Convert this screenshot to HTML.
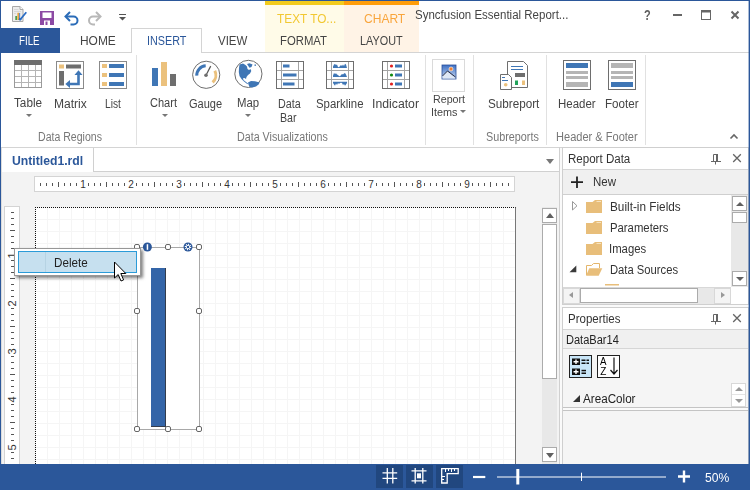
<!DOCTYPE html>
<html><head><meta charset="utf-8"><title>Syncfusion Essential Report Designer</title>
<style>
*{box-sizing:border-box;margin:0;padding:0}
html,body{width:750px;height:490px;overflow:hidden;background:#fff}
body{position:relative;font-family:"Liberation Sans",sans-serif;font-size:12px;color:#444}
.a{position:absolute}
.t{position:absolute;white-space:nowrap;line-height:16px;transform-origin:0 0}
.sep{position:absolute;width:1px;background:#e1e1e1;top:55px;height:90px}
.dd{position:absolute;width:0;height:0;border-left:3px solid transparent;border-right:3px solid transparent;border-top:3px solid #777}
.rn{position:absolute;font-size:10px;line-height:12px;color:#333;transform:translateX(-50%);background:#fff;padding:0 1px}
.rv{position:absolute;font-size:10px;line-height:12px;color:#333;transform:translate(-50%,-50%) rotate(-90deg);background:#fff;padding:0 1px}
.hd{position:absolute;width:6px;height:6px;border:1px solid #666;border-radius:2px;background:#fff}
.sb{position:absolute;background:#fff;border:1px solid #ababab}
.au{position:absolute;width:0;height:0;border-left:4px solid transparent;border-right:4px solid transparent;border-bottom:5px solid #606060}
.ad{position:absolute;width:0;height:0;border-left:4px solid transparent;border-right:4px solid transparent;border-top:5px solid #606060}
</style></head><body>
<!-- contextual tab groups -->
<div class="a" style="left:265px;top:0;width:79px;height:52px;background:#fffbe8"></div>
<div class="a" style="left:265px;top:0;width:79px;height:5px;background:#f2cb1d"></div>
<div class="a" style="left:344px;top:0;width:75px;height:52px;background:#fff3e6"></div>
<div class="a" style="left:344px;top:0;width:75px;height:5px;background:#ff9d0a"></div>
<!-- tab row -->
<div class="a" style="left:1px;top:52px;width:748px;height:1px;background:#d4d4d4"></div>
<div class="a" style="left:0;top:28px;width:60px;height:25px;background:#2b579a"></div>
<div class="a" style="left:131px;top:28px;width:71px;height:25px;background:#fff;border:1px solid #d4d4d4;border-bottom:none"></div>
<!-- ribbon group separators -->
<div class="sep" style="left:136px"></div>
<div class="sep" style="left:425px"></div>
<div class="sep" style="left:473px"></div>
<div class="sep" style="left:546px"></div>
<div class="sep" style="left:645px"></div>
<div class="a" style="left:1px;top:147px;width:748px;height:1px;background:#d4d4d4"></div>
<div class="a" style="left:1px;top:148px;width:748px;height:316px;background:#f3f3f3"></div>
<div class="a" style="left:1px;top:148px;width:1px;height:316px;background:#dcdcdc"></div>
<div class="dd" style="left:26px;top:114px"></div>
<div class="dd" style="left:161.5px;top:114px"></div>
<div class="dd" style="left:245px;top:114px"></div>
<div class="dd" style="left:460px;top:110px"></div>
<div class="a" style="left:432px;top:59px;width:33px;height:33px;border:1px solid #dadada;background:#fff"></div>
<svg class="a" style="left:0;top:0" width="750" height="147" viewBox="0 0 750 147">
<!-- app icon -->
<path d="M12.500 6.500H20L23 9.500V21.500H12.500Z" fill="#ececec" stroke="#a8a8a8"/>
<path d="M20 6.500V9.500H23" fill="#fff" stroke="#a8a8a8"/>
<path d="M14 9.500H18.500M14 11.500H21M14 13.500H16" stroke="#d8d8d8" stroke-width="1"/>
<rect x="15.300" y="16" width="1.800" height="4" fill="#4a9c4a"/><rect x="17.400" y="12.800" width="1.700" height="7.200" fill="#e8a33d"/><rect x="19.300" y="13" width="0.800" height="7" fill="#2b6cc4"/>
<path d="M20 19.800L21.500 18L26.300 12.200" fill="none" stroke="#2b6cc4" stroke-width="1.800"/><circle cx="20" cy="19.300" r="1.200" fill="#2b6cc4"/>
<!-- save -->
<path d="M40 11H54V25H40Z" fill="#8c4aa4"/><rect x="42.500" y="12.500" width="9" height="5.500" fill="#fff"/><rect x="44" y="20.500" width="6" height="4.500" fill="#fff"/><rect x="45.500" y="21.500" width="2" height="3.500" fill="#8c4aa4"/>
<!-- undo -->
<path d="M70 12L65.500 16.500L70 21" fill="none" stroke="#2b6cb8" stroke-width="2"/><path d="M66 16.500H73.500A4 4 0 0 1 73.500 24.500H70.500" fill="none" stroke="#2b6cb8" stroke-width="2"/>
<!-- redo -->
<path d="M96 12L100.500 16.500L96 21" fill="none" stroke="#b8b8b8" stroke-width="2"/><path d="M100 16.500H93A4 4 0 0 0 93 24.500H95" fill="none" stroke="#b8b8b8" stroke-width="2"/>
<!-- qat dropdown -->
<rect x="119" y="14" width="7" height="1" fill="#555"/><path d="M119 17H126L122.500 20.500Z" fill="#555"/>
<!-- window buttons -->
<rect x="673" y="14" width="9" height="2" fill="#666"/>
<rect x="701.500" y="10.500" width="9" height="9" fill="none" stroke="#666"/><rect x="701" y="10" width="10" height="2.500" fill="#666"/>
<path d="M731.500 11.500L738.500 18.500M738.500 11.500L731.500 18.500" stroke="#666" stroke-width="2" fill="none"/>
<!-- collapse caret -->
<path d="M730.500 138.500L734 135L737.500 138.500" fill="none" stroke="#666" stroke-width="1.600"/>

<!-- Table -->
<rect x="14.500" y="60.500" width="27" height="27" fill="#fff" stroke="#9a9a9a"/>
<rect x="14" y="60" width="28" height="5" fill="#6e6e6e"/>
<path d="M21.500 65V87M28.500 65V87M35.500 65V87M15 70.500H41M15 76.500H41M15 82.500H41" stroke="#b4b4b4" fill="none"/>
<!-- Matrix -->
<rect x="56.500" y="61.500" width="27" height="27" fill="#fff" stroke="#8a8a8a"/>
<rect x="59" y="64.500" width="5" height="4" fill="#ebc17d"/><rect x="66" y="64.500" width="15" height="4" fill="#6e6e6e"/><rect x="59" y="71" width="5" height="14.500" fill="#6e6e6e"/>
<path d="M78.500 84H69M78.500 85.300V74" fill="none" stroke="#3f76b5" stroke-width="2.600"/><path d="M74.500 75L78.500 70.300L82.500 75Z" fill="#3f76b5"/><path d="M70 80L65.300 84L70 88Z" fill="#3f76b5"/>
<!-- List -->
<rect x="99.500" y="61.500" width="27" height="27" fill="#fff" stroke="#8a8a8a"/>
<g fill="#ebc17d"><rect x="102" y="64" width="5" height="4"/><rect x="102" y="73" width="5" height="4"/><rect x="102" y="82" width="5" height="4"/></g>
<g fill="#3f76b5"><rect x="109" y="64" width="15" height="4"/><rect x="109" y="73" width="15" height="4"/><rect x="109" y="82" width="15" height="4"/></g>
<!-- Chart -->
<rect x="152" y="68" width="6" height="18" fill="#3f76b5"/><rect x="161" y="62" width="6" height="24" fill="#ebc17d"/><rect x="170" y="74" width="6" height="12" fill="#6e6e6e"/>
<!-- Gauge -->
<circle cx="206.200" cy="74.800" r="13.600" fill="#fff" stroke="#6e6e6e" stroke-width="1"/>
<path d="M196.800 75.700A9.400 9.400 0 0 1 205.700 65.800" fill="none" stroke="#3f76b5" stroke-width="3"/>
<path d="M214.800 70.800A9.400 9.400 0 0 1 212.600 82.300" fill="none" stroke="#ebc17d" stroke-width="3"/>
<path d="M206 75.200L210.700 66.100" stroke="#555" stroke-width="1.200"/><circle cx="206" cy="75.200" r="1.800" fill="#6e6e6e"/>
<!-- Map -->
<circle cx="248.400" cy="73.900" r="13.600" fill="#fff" stroke="#6e6e6e" stroke-width="1"/>
<path d="M239.500 64.500L243 63.500L245.500 65L247 66.500L247.500 69L249 70L250.500 69L251.300 71L250 73.500L248 75L246.500 77L246 79L244.500 78L243 78.300L243.500 80L246 82L248 83.500L247.500 84.300L244 81.500L241.500 79L239.500 76L238.800 72L239 68Z" fill="#3f76b5"/>
<path d="M248 82.500L251 81L255 81.200L259.700 82.500L258.500 84.500L256 86.500L252 87.600L249.500 87L248.500 84.500Z" fill="#3f76b5"/>
<path d="M247 64L249.500 63.300L252.500 64.500L251.500 67L249.500 67.700L248.300 66Z" fill="#3f76b5"/><rect x="254.500" y="64.500" width="1.500" height="1.300" fill="#3f76b5"/>
<!-- DataBar -->
<g id="tbl"><rect x="276.500" y="61.500" width="27" height="27" fill="#fff" stroke="#6e6e6e"/><path d="M281.500 62V88M298.500 62V88M277 70.500H303M277 79.500H303" stroke="#a4a4a4" fill="none"/></g>
<g fill="#3f76b5"><rect x="283" y="64.500" width="6.500" height="3"/><rect x="283" y="73.500" width="13.500" height="3"/><rect x="283" y="82.500" width="11.500" height="3"/></g>
<!-- Sparkline -->
<use href="#tbl" x="50"/>
<g fill="#3f76b5"><path d="M333 68V66.500L334 64.500L335 64L336 65L337 64.500L338 67L339 67.200L340 66L341 65L342 66L343 64.500L344 66L345 63.800L346 64.500L347 68Z"/><path d="M333 77V75.500L334 73L335 74L336 73.200L337 74.500L338 75L339 76L340 76.200L341 75L342 74L343 74.500L344 73.500L345 73L346 74.500L347 77Z"/><path d="M333 81.700H347V83L346 84.500L345 85.800L344 84L343 85L342 83L341 82.800L340 83L339 84L338 83L337 85L336 83.500L335 85.800L334 84.500L333 83Z"/></g>
<!-- Indicator -->
<use href="#tbl" x="106"/>
<circle cx="391.500" cy="66" r="1.600" fill="#e02020"/><circle cx="391.500" cy="75" r="1.600" fill="#118a11"/><circle cx="391.500" cy="84" r="1.600" fill="#e02020"/>
<g fill="#3f76b5"><rect x="395" y="64.500" width="7" height="3"/><rect x="395" y="73.500" width="7" height="3"/><rect x="395" y="82.500" width="7" height="3"/></g>
<!-- Report items picture -->
<defs><linearGradient id="pg" x1="0" y1="0" x2="0" y2="1"><stop offset="0" stop-color="#3d6fc4"/><stop offset="1" stop-color="#c8d8f0"/></linearGradient></defs>
<rect x="442" y="65" width="14" height="14" fill="url(#pg)" stroke="#2a4f9a" stroke-width="0.800"/>
<circle cx="451" cy="69" r="2" fill="#f08030" stroke="#fff" stroke-width="0.600"/>
<path d="M442.500 76L447.500 71L452 75.500L455.500 78.500H442.500Z" fill="#dfe8f5"/><path d="M442.500 76L447.500 71L455.500 77" fill="none" stroke="#223" stroke-width="0.900"/>
<!-- Subreport -->
<path d="M507.500 61.500H523.500L527.500 65.500V87.500H507.500Z" fill="#fff" stroke="#6e6e6e"/>
<path d="M511 66.500H523M511 69.500H523" stroke="#3f76b5"/><rect x="515" y="73" width="10" height="4" fill="#6e6e6e"/><rect x="515" y="80.500" width="3" height="4.500" fill="#22a35a"/><rect x="522" y="80.500" width="3" height="4.500" fill="#ebc17d"/>
<path d="M500.500 74.500H508.500L511.500 77.500V89.500H500.500Z" fill="#fff" stroke="#6e6e6e"/>
<path d="M502 77.500H505M502 80.500H508" stroke="#3f76b5"/><circle cx="505.700" cy="84.800" r="1.800" fill="#ebc17d"/>
<!-- Header -->
<rect x="563.500" y="60.500" width="27" height="29" fill="#fff" stroke="#6e6e6e"/>
<rect x="566" y="63" width="22" height="5" fill="#3f76b5"/><rect x="566" y="71" width="22" height="3" fill="#b5b5b5"/><rect x="566" y="76" width="22" height="3" fill="#b5b5b5"/><rect x="566" y="82" width="22" height="5" fill="#b5b5b5"/>
<!-- Footer -->
<rect x="608.500" y="60.500" width="27" height="29" fill="#fff" stroke="#6e6e6e"/>
<rect x="611" y="63" width="22" height="5" fill="#b5b5b5"/><rect x="611" y="71" width="22" height="3" fill="#b5b5b5"/><rect x="611" y="76" width="22" height="3" fill="#b5b5b5"/><rect x="611" y="82" width="22" height="5" fill="#3f76b5"/>
</svg>

<!-- document tab strip -->
<div class="a" style="left:2px;top:148px;width:92px;height:24px;background:#fff"></div>
<div class="a" style="left:93px;top:148px;width:467px;height:24px;background:#fff;border-left:1px solid #d0d0d0;border-bottom:1px solid #d0d0d0"></div>
<div class="a" style="left:546px;top:159px;width:0;height:0;border-left:4px solid transparent;border-right:4px solid transparent;border-top:5.500px solid #777"></div>
<div class="a" style="left:34px;top:176px;width:481px;height:16px;background:#fff;border:1px solid #d4d4d4"></div>
<div class="a" style="left:40px;top:183px;width:470px;height:3px;background:repeating-linear-gradient(90deg,#555 0,#555 1px,transparent 1px,transparent 6px)"></div>
<div class="a" style="left:58px;top:182px;width:452px;height:5px;background:repeating-linear-gradient(90deg,#555 0,#555 1px,transparent 1px,transparent 48px)"></div>
<div class="a" style="left:4px;top:206px;width:16px;height:258px;background:#fff;border:1px solid #d4d4d4;border-bottom:none"></div>
<div class="a" style="left:11px;top:212px;width:3px;height:252px;background:repeating-linear-gradient(180deg,#555 0,#555 1px,transparent 1px,transparent 6px)"></div>
<div class="a" style="left:10px;top:230px;width:5px;height:234px;background:repeating-linear-gradient(180deg,#555 0,#555 1px,transparent 1px,transparent 48px)"></div>
<div class="a" style="left:35px;top:207px;width:481px;height:257px;background-color:#fff;background-image:linear-gradient(#f5f5f5 1px,transparent 1px),linear-gradient(90deg,#f5f5f5 1px,transparent 1px);background-size:12px 12px,12px 12px;background-position:-1px -1px;border:1px dotted #111;border-bottom:none;border-right:1px solid #777"></div>
<div class="rn" style="left:83px;top:179px">1</div><div class="rn" style="left:131px;top:179px">2</div><div class="rn" style="left:179px;top:179px">3</div><div class="rn" style="left:227px;top:179px">4</div><div class="rn" style="left:275px;top:179px">5</div><div class="rn" style="left:323px;top:179px">6</div><div class="rn" style="left:371px;top:179px">7</div><div class="rn" style="left:419px;top:179px">8</div><div class="rn" style="left:467px;top:179px">9</div>
<svg class="a" style="left:5px;top:207px" width="14" height="257" viewBox="5 207 14 257" font-family="Liberation Sans, sans-serif" font-size="11" fill="#333"><rect x="6" y="251" width="12" height="8" fill="#fff"/><text transform="translate(16.300 255.4) rotate(-90)" text-anchor="middle">1</text><rect x="6" y="299" width="12" height="8" fill="#fff"/><text transform="translate(16.300 303.4) rotate(-90)" text-anchor="middle">2</text><rect x="6" y="347" width="12" height="8" fill="#fff"/><text transform="translate(16.300 351.4) rotate(-90)" text-anchor="middle">3</text><rect x="6" y="395" width="12" height="8" fill="#fff"/><text transform="translate(16.300 399.4) rotate(-90)" text-anchor="middle">4</text><rect x="6" y="443" width="12" height="8" fill="#fff"/><text transform="translate(16.300 447.4) rotate(-90)" text-anchor="middle">5</text></svg>
<!-- design scrollbar -->
<div class="a" style="left:542px;top:207px;width:15px;height:257px;background:#e8e8e8"></div>
<div class="sb" style="left:542px;top:208px;width:15px;height:15px"></div>
<div class="au" style="left:545.500px;top:213px"></div>
<div class="sb" style="left:542px;top:224px;width:15px;height:155px"></div>
<div class="sb" style="left:542px;top:447px;width:15px;height:15px"></div>
<div class="ad" style="left:545.500px;top:453px"></div>
<!-- databar item -->
<div class="a" style="left:137px;top:247px;width:63px;height:183px;border:1px solid #a8a8a8;background:#fff"></div>
<div class="a" style="left:151px;top:268px;width:15px;height:159px;background:#3465a8;border-right:1px solid #333c4c;border-bottom:1px solid #333c4c"></div>
<div class="hd" style="left:134px;top:244px"></div><div class="hd" style="left:165px;top:244px"></div><div class="hd" style="left:196px;top:244px"></div>
<div class="hd" style="left:134px;top:308px"></div><div class="hd" style="left:196px;top:308px"></div>
<div class="hd" style="left:134px;top:426px"></div><div class="hd" style="left:165px;top:426px"></div><div class="hd" style="left:196px;top:426px"></div>
<svg class="a" style="left:142px;top:242px" width="52" height="10" viewBox="0 0 52 10"><circle cx="5.400" cy="5" r="4.500" fill="#2b579a"/><rect x="4.700" y="2.200" width="1.500" height="5.600" fill="#fff"/><circle cx="46" cy="5" r="4.500" fill="#2b579a"/><circle cx="46" cy="5" r="2.600" fill="none" stroke="#fff" stroke-width="1.300" stroke-dasharray="1 1"/><circle cx="46" cy="5" r="1.700" fill="none" stroke="#fff" stroke-width="0.900"/></svg>
<!-- context menu -->
<div class="a" style="left:14px;top:248px;width:127px;height:28px;background:#fff;border:1px solid #979797;box-shadow:2px 2px 3px rgba(0,0,0,.5)"></div>
<div class="a" style="left:18px;top:251px;width:119px;height:22px;background:#c6e0ef;border:1px solid #2a9bd8"></div>
<div class="a" style="left:45px;top:252px;width:1px;height:20px;background:#b6d3e3"></div>
<svg class="a" style="left:113px;top:260px" width="15" height="23" viewBox="0 0 15 23"><path d="M1.500 2V18L5.200 14.500L8 21L10.600 19.900L7.800 13.500H12.800Z" fill="#fff" stroke="#000" stroke-width="1" stroke-linejoin="miter"/></svg>

<!-- splitter / doc right border -->
<div class="a" style="left:559px;top:147px;width:1px;height:317px;background:#d0d0d0"></div>
<div class="a" style="left:560px;top:148px;width:189px;height:316px;background:#fafafa"></div>
<!-- Report Data panel -->
<div class="a" style="left:562px;top:147px;width:187px;height:158px;background:#fff;border:1px solid #cfcfcf"></div>
<div class="a" style="left:563px;top:169px;width:185px;height:26px;background:#f0f0f0;border-top:1px solid #d6d6d6;border-bottom:1px solid #cfcfcf"></div>
<svg class="a" style="left:708px;top:150px" width="40" height="18" viewBox="708 150 40 18"><path d="M711 161.500H721M715.500 162V164.500M713.500 161V154.500H717.500V161" fill="none" stroke="#666" stroke-width="1"/><rect x="716" y="154" width="2" height="7" fill="#666"/><path d="M733.200 154.300L740.800 162M740.800 154.300L733.200 162" fill="none" stroke="#666" stroke-width="1.300"/></svg>
<svg class="a" style="left:570px;top:175px" width="14" height="14" viewBox="570 175 14 14"><path d="M577 176.500V188M571 182.200H583" stroke="#222" stroke-width="1.800" fill="none"/></svg>
<svg class="a" style="left:564px;top:196px" width="60" height="92" viewBox="564 196 60 92">
<path d="M572.500 201.500L577 205.800L572.500 210Z" fill="#fff" stroke="#999" stroke-width="1"/>
<path d="M576.300 265.500V272.300H569.500Z" fill="#3a3a3a"/>
<g fill="#e8be7a"><path d="M586 202H592.500L595 200H602V213H586Z"/><path d="M586 223H592.500L595 221H602V234H586Z"/><path d="M586 244H592.500L595 242H602V255H586Z"/></g>
<g stroke="#f6e3c0" stroke-width="1" fill="none"><path d="M596.500 201.500H601"/><path d="M596.500 222.500H601"/><path d="M596.500 243.500H601"/></g>
<path d="M586.500 275V265.500H591.500L593.500 263.500H599.500V268" fill="none" stroke="#e4b66c" stroke-width="1"/><path d="M586 275.700L589.300 268.300H602.300L598.700 275.700Z" fill="#e8be7a"/>
<rect x="605" y="284" width="14" height="1.500" fill="#e8be7a"/>
</svg>
<!-- tree v scroll -->
<div class="a" style="left:731px;top:195px;width:17px;height:92px;background:#e8e8e8"></div>
<div class="sb" style="left:732px;top:196px;width:15px;height:15px"></div><div class="au" style="left:735.500px;top:202px;border-bottom-width:4px"></div>
<div class="sb" style="left:732px;top:212px;width:15px;height:11px"></div>
<div class="sb" style="left:732px;top:271px;width:15px;height:15px"></div><div class="ad" style="left:735.500px;top:276.500px;border-top-width:4px"></div>
<!-- tree h scroll -->
<div class="a" style="left:563px;top:287px;width:168px;height:17px;background:#e8e8e8;border-top:1px solid #d8d8d8"></div>
<div class="sb" style="left:563px;top:288px;width:17px;height:16px;border-color:#d8d8d8;background:#f4f4f4"></div>
<div class="a" style="left:569px;top:292px;width:0;height:0;border-top:3.500px solid transparent;border-bottom:3.500px solid transparent;border-right:4.500px solid #999"></div>
<div class="sb" style="left:580px;top:288px;width:118px;height:15px"></div>
<div class="sb" style="left:714px;top:288px;width:17px;height:16px;border-color:#d8d8d8;background:#f4f4f4"></div>
<div class="a" style="left:721px;top:292px;width:0;height:0;border-top:3.500px solid transparent;border-bottom:3.500px solid transparent;border-left:4.500px solid #999"></div>
<!-- Properties panel -->
<div class="a" style="left:562px;top:307px;width:187px;height:157px;background:#f5f5f5;border:1px solid #cfcfcf;border-bottom:none"></div>
<div class="a" style="left:563px;top:308px;width:185px;height:22px;background:#fff;border-bottom:1px solid #d6d6d6"></div>
<svg class="a" style="left:708px;top:310px" width="40" height="18" viewBox="708 150 40 18"><path d="M711 161.500H721M715.500 162V164.500M713.500 161V154.500H717.500V161" fill="none" stroke="#666" stroke-width="1"/><rect x="716" y="154" width="2" height="7" fill="#666"/><path d="M733.200 154.300L740.800 162M740.800 154.300L733.200 162" fill="none" stroke="#666" stroke-width="1.300"/></svg>
<div class="a" style="left:563px;top:330px;width:185px;height:19px;background:#f0f0f0;border-bottom:1px solid #d6d6d6"></div>
<div class="a" style="left:569px;top:355px;width:23px;height:23px;background:#c9e6f8;border:1px solid #222"></div>
<svg class="a" style="left:569px;top:355px" width="23" height="23" viewBox="569 355 23 23"><g fill="#111"><rect x="572" y="358.500" width="8" height="6.500"/><rect x="572" y="368.500" width="8" height="6.500"/><rect x="581.500" y="359.500" width="4" height="1.500"/><rect x="586.500" y="359.500" width="2.500" height="1.500"/><rect x="581.500" y="362.500" width="4" height="1.500"/><rect x="586.500" y="362.500" width="2.500" height="1.500"/><rect x="581.500" y="369.800" width="4.500" height="1.500"/><rect x="581.500" y="372.500" width="4.500" height="1.500"/></g><path d="M573.500 361.800H578.500M576 359.500V364M573.500 371.800H578.500M576 369.500V374" stroke="#fff" stroke-width="1.400" fill="none"/></svg>
<div class="a" style="left:597px;top:355px;width:23px;height:23px;background:#fff;border:1px solid #222"></div>
<svg class="a" style="left:608px;top:356px" width="12" height="20" viewBox="608 356 12 20"><path d="M614 357.500V374M610.500 370L614 374L617.500 370" fill="none" stroke="#111" stroke-width="1.200"/></svg>
<div class="a" style="left:573px;top:395px;width:0;height:0;border-left:7px solid transparent;border-bottom:7px solid #333"></div>
<div class="sb" style="left:731px;top:383px;width:15px;height:24px;border-color:#d8d8d8"></div>
<div class="a" style="left:732px;top:394px;width:13px;height:1px;background:#e4e4e4"></div>
<div class="au" style="left:734.500px;top:387px;border-bottom-color:#999;border-bottom-width:4px"></div><div class="ad" style="left:734.500px;top:399px;border-top-color:#999;border-top-width:4px"></div>
<div class="a" style="left:563px;top:407px;width:185px;height:4px;border-top:1px solid #c4c4c4;border-bottom:1px solid #c4c4c4;background:#fafafa"></div>

<div class="a" style="left:0;top:464px;width:750px;height:26px;background:#2b579a"></div>
<div class="a" style="left:376px;top:465px;width:27px;height:23px;background:#21477f"></div>
<div class="a" style="left:406px;top:465px;width:27px;height:23px;background:#21477f"></div>
<div class="a" style="left:436px;top:465px;width:27px;height:23px;background:#21477f"></div>
<svg class="a" style="left:370px;top:464px" width="380" height="26" viewBox="370 464 380 26" fill="none" stroke="#fff">
<path d="M387.300 468V483.500M392.800 468V483.500M382.500 472.800H397.200M382.500 478.300H397.200" stroke-width="1.300"/>
<path d="M415.200 468V483.500M422.800 468V483.500M411.500 470.800H426.500M411.500 480.800H426.500" stroke-width="1.300"/><rect x="417" y="473.300" width="4" height="5" fill="#fff" stroke="none"/>
<path d="M441.700 483V468.700H458.200V473.700H447.200V483Z" stroke-width="1.300"/><path d="M445.500 469V472M448.500 469V471M451.500 469V472M454.500 469V471M442 476.500H445M442 479.500H444" stroke-width="1"/>
<path d="M473 477H485.300" stroke-width="2.200"/>
<path d="M497 477H666" stroke-width="1"/><path d="M517.800 469V484.500" stroke-width="3"/><path d="M581.500 472.700V481" stroke-width="1"/>
<path d="M678 476.500H690M684 470.500V482.500" stroke-width="2.400"/>
</svg>

<div class="a" style="left:0;top:0;width:750px;height:490px;will-change:transform">
<div class="t" style="left:19.40px;top:33.00px;font-size:12px;color:#fff;transform:scaleX(0.8130)">FILE</div>
<div class="t" style="left:79.60px;top:33.00px;font-size:12px;color:#444;transform:scaleX(0.9946)">HOME</div>
<div class="t" style="left:146.70px;top:33.00px;font-size:12px;color:#2b579a;transform:scaleX(0.8974)">INSERT</div>
<div class="t" style="left:218.00px;top:33.00px;font-size:12px;color:#444;transform:scaleX(0.9572)">VIEW</div>
<div class="t" style="left:280.40px;top:33.00px;font-size:12px;color:#444;transform:scaleX(0.9437)">FORMAT</div>
<div class="t" style="left:360.30px;top:33.00px;font-size:12px;color:#444;transform:scaleX(0.9039)">LAYOUT</div>
<div class="t" style="left:277.30px;top:10.70px;font-size:13.5px;color:#f2c832;transform:scaleX(0.8772)">TEXT TO...</div>
<div class="t" style="left:363.70px;top:10.70px;font-size:13.5px;color:#f9a53c;transform:scaleX(0.8911)">CHART</div>
<div class="t" style="left:415.30px;top:7.20px;font-size:12px;color:#444;transform:scaleX(0.9584)">Syncfusion Essential Report...</div>
<div class="t" style="left:644.00px;top:7.00px;font-size:14.5px;color:#606060;transform:scaleX(0.7556);font-weight:bold">?</div>
<div class="t" style="left:13.60px;top:95.00px;font-size:12px;color:#444;transform:scaleX(0.9788)">Table</div>
<div class="t" style="left:53.60px;top:96.00px;font-size:12px;color:#444;transform:scaleX(1.0041)">Matrix</div>
<div class="t" style="left:105.00px;top:96.00px;font-size:12px;color:#444;transform:scaleX(0.8480)">List</div>
<div class="t" style="left:150.00px;top:95.00px;font-size:12px;color:#444;transform:scaleX(0.9197)">Chart</div>
<div class="t" style="left:189.00px;top:96.00px;font-size:12px;color:#444;transform:scaleX(0.9187)">Gauge</div>
<div class="t" style="left:237.00px;top:95.00px;font-size:12px;color:#444;transform:scaleX(0.9463)">Map</div>
<div class="t" style="left:278.40px;top:96.00px;font-size:12px;color:#444;transform:scaleX(0.8959)">Data</div>
<div class="t" style="left:280.00px;top:109.60px;font-size:12px;color:#444;transform:scaleX(0.8888)">Bar</div>
<div class="t" style="left:315.60px;top:96.00px;font-size:12px;color:#444;transform:scaleX(0.9493)">Sparkline</div>
<div class="t" style="left:371.98px;top:96.00px;font-size:12px;color:#444;transform:scaleX(1.0216)">Indicator</div>
<div class="t" style="left:433.00px;top:91.00px;font-size:11px;color:#444;transform:scaleX(0.9709)">Report</div>
<div class="t" style="left:430.61px;top:104.00px;font-size:11px;color:#444;transform:scaleX(0.9851)">Items</div>
<div class="t" style="left:488.00px;top:96.00px;font-size:12px;color:#444;transform:scaleX(0.9744)">Subreport</div>
<div class="t" style="left:558.00px;top:96.00px;font-size:12px;color:#444;transform:scaleX(0.9553)">Header</div>
<div class="t" style="left:605.00px;top:96.00px;font-size:12px;color:#444;transform:scaleX(0.9687)">Footer</div>
<div class="t" style="left:37.60px;top:129.00px;font-size:12px;color:#777;transform:scaleX(0.8802)">Data Regions</div>
<div class="t" style="left:236.60px;top:129.00px;font-size:12px;color:#777;transform:scaleX(0.8916)">Data Visualizations</div>
<div class="t" style="left:486.20px;top:129.00px;font-size:12px;color:#777;transform:scaleX(0.8995)">Subreports</div>
<div class="t" style="left:556.30px;top:129.00px;font-size:12px;color:#777;transform:scaleX(0.9209)">Header &amp; Footer</div>
<div class="t" style="left:11.60px;top:152.60px;font-size:12px;color:#2b579a;transform:scaleX(1.0162);font-weight:bold">Untitled1.rdl</div>
<div class="t" style="left:567.60px;top:151.40px;font-size:12px;color:#333;transform:scaleX(0.9627)">Report Data</div>
<div class="t" style="left:592.70px;top:174.20px;font-size:12px;color:#333;transform:scaleX(0.9573)">New</div>
<div class="t" style="left:609.50px;top:198.70px;font-size:12px;color:#333;transform:scaleX(0.9816)">Built-in Fields</div>
<div class="t" style="left:609.50px;top:219.90px;font-size:12px;color:#333;transform:scaleX(0.9432)">Parameters</div>
<div class="t" style="left:609.36px;top:241.00px;font-size:12px;color:#333;transform:scaleX(0.9439)">Images</div>
<div class="t" style="left:609.50px;top:262.10px;font-size:12px;color:#333;transform:scaleX(0.9367)">Data Sources</div>
<div class="t" style="left:567.60px;top:311.40px;font-size:12px;color:#333;transform:scaleX(0.9581)">Properties</div>
<div class="t" style="left:565.80px;top:331.60px;font-size:12px;color:#222;transform:scaleX(0.9204)">DataBar14</div>
<div class="t" style="left:583.20px;top:390.90px;font-size:12px;color:#222;transform:scaleX(0.9717)">AreaColor</div>
<div class="t" style="left:705.00px;top:469.50px;font-size:13px;color:#fff;transform:scaleX(0.9335)">50%</div>
<div class="t" style="left:599.80px;top:354.20px;font-size:10px;color:#000;transform:scaleX(0.9714)">A</div>
<div class="t" style="left:600.20px;top:363.60px;font-size:10px;color:#000;transform:scaleX(1.0000)">Z</div>
<div class="t" style="left:53.50px;top:254.50px;font-size:12px;color:#222;transform:scaleX(0.9710)">Delete</div>
</div>
<!-- window border -->
<div class="a" style="left:0;top:0;width:750px;height:1px;background:#2b579a"></div>
<div class="a" style="left:0;top:0;width:1px;height:490px;background:#2b579a"></div>
<div class="a" style="left:748px;top:1px;width:1px;height:463px;background:rgba(43,87,154,.4)"></div>
<div class="a" style="left:749px;top:0;width:1px;height:490px;background:#2b579a"></div>
</body></html>
